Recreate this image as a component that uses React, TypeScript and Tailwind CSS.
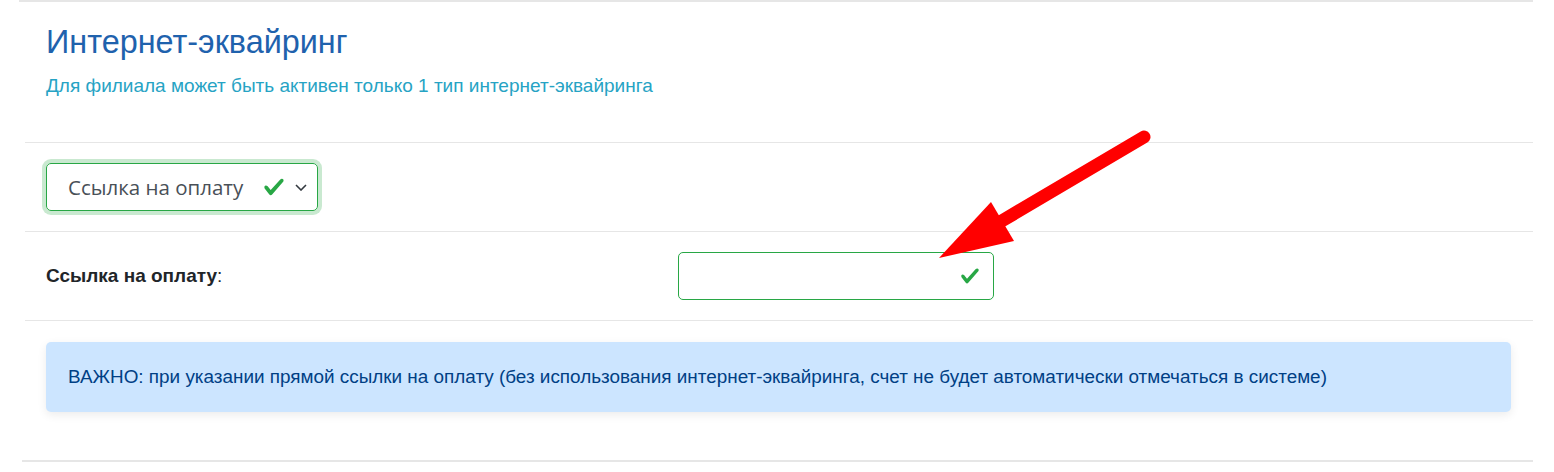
import React from "react";

const font = { fontFamily: '"Liberation Sans", Arial, sans-serif' };

function ValidCheck({ className }: { className?: string }) {
  // bootstrap 4 valid-state check
  return (
    <svg viewBox="0 0 8 8" className={className}>
      <path
        fill="#28a745"
        d="M2.3 6.73L.6 4.53c-.4-1.04.46-1.4 1.1-.8l1.1 1.4 3.4-3.8c.6-.63 1.6-.27 1.2.7l-4 4.6c-.43.5-.8.4-1.1.1z"
      />
    </svg>
  );
}

function Arrow() {
  return (
    <svg
      className="absolute left-0 top-0 pointer-events-none"
      width="1554"
      height="472"
      viewBox="0 0 1554 472"
    >
      <line x1="1144" y1="137" x2="1000" y2="222" stroke="#ff0000" strokeWidth="13" strokeLinecap="round" />
      <polygon points="939,258 991,202 1014,241" fill="#ff0000" />
    </svg>
  );
}

export default function App() {
  return (
    <div className="relative w-[1554px] h-[472px] bg-white overflow-hidden" style={font}>
      <div className="ml-[19px] w-[1514px] border-t-2 border-[#e6e6e6]">
        <div className="pl-[27px] pt-[21px] pb-[43px]">
          <h1 className="text-[32.4px] leading-[38px] text-[#1f62ad]">Интернет-эквайринг</h1>
          <p className="mt-[11px] text-[19px] leading-[27px] text-[#26a3c4]">
            Для филиала может быть активен только 1 тип интернет-эквайринга
          </p>
        </div>

        <div className="ml-[6px] border-t border-[#e6e6e6] h-[89px] flex items-center pl-[21px]">
          <div className="w-[272px] h-[48px] rounded-[5px] border border-[#28a745] ring-4 ring-[rgba(40,167,69,0.25)] flex items-center pl-[21px] pr-[10px]">
            <span
              className="text-[20.5px] text-[#495057]"
              style={{ fontFamily: '"Open Sans", "DejaVu Sans", sans-serif' }}
            >
              Ссылка на оплату
            </span>
            <ValidCheck className="ml-auto w-[22px] h-[22px]" />
            <svg viewBox="0 0 12 7" className="ml-[10px] w-[12px] h-[7px]">
              <polyline points="1,1 6,6 11,1" fill="none" stroke="#343a40" strokeWidth="1.6" />
            </svg>
          </div>
        </div>

        <div className="ml-[6px] border-t border-[#e6e6e6] h-[89px] flex items-center pl-[21px]">
          <div className="w-[632px] text-[19px] text-[#212529]">
            <span className="font-bold">Ссылка на оплату</span>:
          </div>
          <div className="w-[316px] h-[48px] rounded-[5px] border border-[#28a745] flex items-center justify-end pr-[13px]">
            <ValidCheck className="w-[20px] h-[20px]" />
          </div>
        </div>

        <div className="ml-[6px] border-t border-[#e6e6e6] pt-[21px] pb-[48px] pl-[21px] pr-[22px]">
          <div className="h-[70px] rounded-[5px] bg-[#cce5ff] shadow-[0_3px_10px_rgba(0,0,0,0.08)] flex items-center pl-[22px] text-[18.9px] text-[#004085]">
            ВАЖНО: при указании прямой ссылки на оплату (без использования интернет-эквайринга, счет не будет автоматически отмечаться в системе)
          </div>
        </div>

        <div className="ml-[3px] border-t-2 border-[#e6e6e6]" />
      </div>
      <Arrow />
    </div>
  );
}
